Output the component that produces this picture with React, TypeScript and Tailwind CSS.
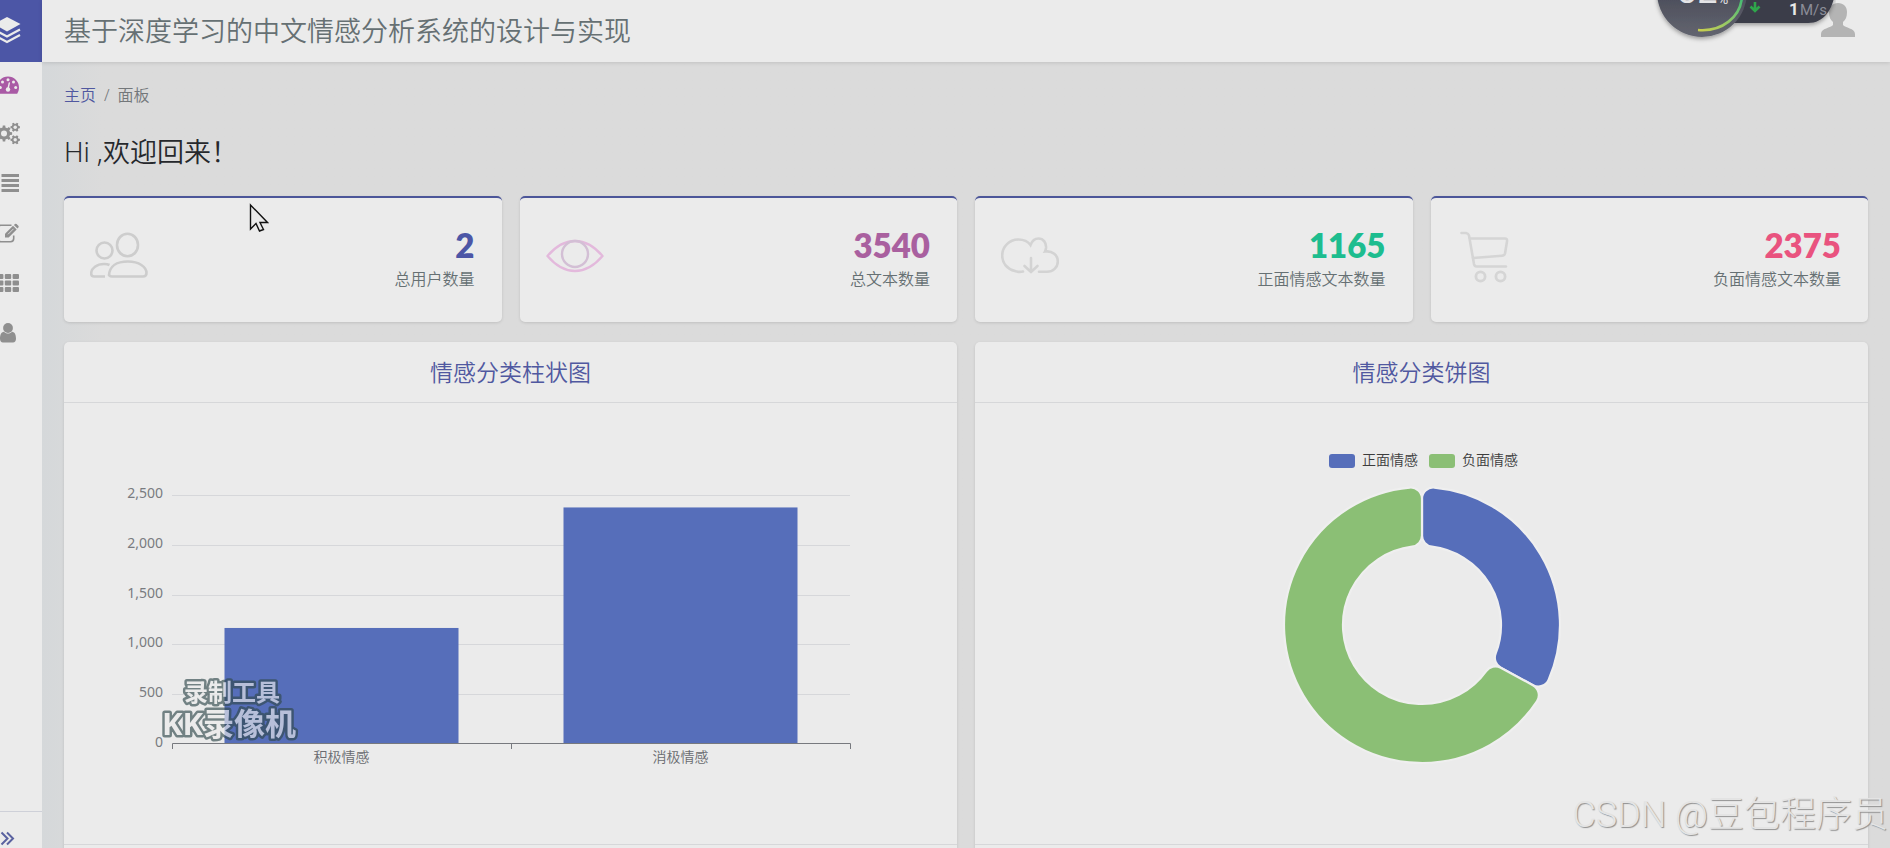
import React from "react";

const font = "font-['Noto_Sans','Noto_Sans_CJK_SC',sans-serif]";

/* ---------- sidebar icons ---------- */

function LayersLogo() {
  return (
    <svg viewBox="0 0 28 28" className="h-7 w-7" aria-hidden="true">
      <path d="M14 0 L27.500 7 L14 14.500 L0.500 7 Z" fill="#ebebeb" />
      <path d="M1 12.500 L14 19.500 L27 12.500" fill="none" stroke="#ebebeb" strokeWidth="2.200" />
      <path d="M1 18 L14 25 L27 18" fill="none" stroke="#ebebeb" strokeWidth="2.200" />
    </svg>
  );
}

function DashboardIcon() {
  return (
    <svg viewBox="0 0 22 22" className="h-[22px] w-[22px]" aria-hidden="true">
      <path
        d="M11 4.500 A11 11 0 0 1 22 15.500 C22 18 21.300 20 20.200 21.700 H1.800 C0.700 20 0 18 0 15.500 A11 11 0 0 1 11 4.500 Z"
        fill="#a95aa5"
      />
      <g fill="#ebebeb">
        <circle cx="3.300" cy="15.500" r="1.500" />
        <circle cx="5.500" cy="10" r="1.500" />
        <circle cx="11" cy="7.700" r="1.500" />
        <circle cx="16.500" cy="10" r="1.500" />
        <circle cx="18.700" cy="15.500" r="1.500" />
        <circle cx="11" cy="17.500" r="2.200" />
      </g>
      <path d="M11 17 L12.300 11" stroke="#ebebeb" strokeWidth="1.400" strokeLinecap="round" />
    </svg>
  );
}

function gearPath(cx: number, cy: number, outer: number, root: number, teeth: number) {
  const pts: string[] = [];
  const step = (Math.PI * 2) / teeth;
  for (let i = 0; i < teeth; i++) {
    const a = i * step;
    const marks: [number, number][] = [
      [root, a - step * 0.3],
      [outer, a - step * 0.19],
      [outer, a + step * 0.19],
      [root, a + step * 0.3],
    ];
    marks.forEach(([r, t]) =>
      pts.push(`${(cx + r * Math.cos(t)).toFixed(2)} ${(cy + r * Math.sin(t)).toFixed(2)}`)
    );
  }
  return `M${pts.join("L")}Z`;
}

function CogsIcon() {
  return (
    <svg viewBox="0 0 24 24" className="h-6 w-6" aria-hidden="true">
      <g fill="#8f8f8f">
        <path d={gearPath(8, 12.5, 8.2, 6.2, 8)} />
        <path d={gearPath(19.2, 6.2, 4.8, 3.6, 6)} />
        <path d={gearPath(19.2, 18.8, 4.8, 3.6, 6)} />
      </g>
      <g fill="#ebebeb">
        <circle cx="8" cy="12.500" r="3" />
        <circle cx="19.200" cy="6.200" r="1.700" />
        <circle cx="19.200" cy="18.800" r="1.700" />
      </g>
    </svg>
  );
}

function ListIcon() {
  return (
    <svg viewBox="0 0 22 18" className="h-[18px] w-[22px]" fill="#8f8f8f" aria-hidden="true">
      {[0, 5, 10, 15].map((y) => (
        <g key={y}>
          <rect x="0" y={y} width="3" height="3" />
          <rect x="4.500" y={y} width="17.500" height="3" />
        </g>
      ))}
    </svg>
  );
}

function EditIcon() {
  return (
    <svg viewBox="0 0 22 20" className="h-5 w-[22px]" fill="none" stroke="#8f8f8f" strokeWidth="1.600" aria-hidden="true">
      <path d="M14.500 2.300 H4 Q0.800 2.300 0.800 5.500 V15.500 Q0.800 18.700 4 18.700 H13.500 Q16.700 18.700 16.700 15.500 V12.500" />
      <path d="M8 14.500 V10.800 L16 2.800 L19.700 6.500 L11.700 14.500 Z" fill="#8f8f8f" stroke="none" />
      <path d="M16.900 1.900 L18 0.900 Q18.800 0.300 19.600 1.100 L21.300 2.800 Q22.100 3.600 21.400 4.400 L20.500 5.500 Z" fill="#8f8f8f" stroke="none" />
      <path d="M11 11.300 L16.500 5.800" stroke="#ebebeb" strokeWidth="0.800" />
    </svg>
  );
}

function GridIcon() {
  return (
    <svg viewBox="0 0 22 18" className="h-[18px] w-[22px]" fill="#8f8f8f" aria-hidden="true">
      {[0, 6.5, 13].map((y) =>
        [0, 7.8, 15.6].map((x) => (
          <rect key={`${x}-${y}`} x={x} y={y} width="6.400" height="5" rx="1" />
        ))
      )}
    </svg>
  );
}

function UserIcon() {
  return (
    <svg viewBox="0 0 16 20" className="h-5 w-4" fill="#8f8f8f" aria-hidden="true">
      <circle cx="8" cy="5" r="4.900" />
      <path d="M4 8.700 C5 9.900 6.500 10.500 8 10.500 C9.500 10.500 11 9.900 12 8.700 C15 8.900 16 12 16 15.800 C16 18 14.800 19.500 13 19.500 H3 C1.200 19.500 0 18 0 15.800 C0 12 1 8.900 4 8.700 Z" />
    </svg>
  );
}

const navItems = [
  { label: "面板", icon: <DashboardIcon /> },
  { label: "设置", icon: <CogsIcon /> },
  { label: "列表", icon: <ListIcon /> },
  { label: "编辑", icon: <EditIcon /> },
  { label: "表格", icon: <GridIcon /> },
  { label: "用户", icon: <UserIcon /> },
];

function Sidebar() {
  return (
    <aside className="flex w-[42px] shrink-0 flex-col overflow-hidden bg-[#ebebeb]">
      <a
        href="#home"
        aria-label="首页"
        className="-ml-[28px] flex h-[62px] w-[70px] shrink-0 items-center justify-center bg-[#4c56a6]"
      >
        <LayersLogo />
      </a>
      <nav className="-ml-[26px] flex w-[68px] flex-1 flex-col gap-[10px] pt-px">
        {navItems.map((item) => (
          <a
            key={item.label}
            href="#nav"
            aria-label={item.label}
            className="flex h-10 items-center justify-center"
          >
            {item.icon}
          </a>
        ))}
      </nav>
      <button
        type="button"
        aria-label="展开"
        className="flex h-[37px] shrink-0 items-center border-t border-[#ced0d8] pt-[18px]"
      >
        <svg viewBox="0 0 16 18" className="h-[18px] w-4" fill="none" stroke="#5a62a0" strokeWidth="2" aria-hidden="true">
          <path d="M1.500 2.500 L7.500 8.500 L1.500 14.500 M7 2.500 L13 8.500 L7 14.500" />
        </svg>
      </button>
    </aside>
  );
}

/* ---------- header ---------- */

function SpeedWidget() {
  return (
    <svg
      viewBox="0 0 190 46"
      className="absolute top-0 right-[54px] h-[46px] w-[190px]"
      role="img"
      aria-label="82% 1M/s"
    >
      <defs>
        <linearGradient id="arc" x1="1" y1="0" x2="0" y2="1">
          <stop offset="0" stopColor="#3dbb74" />
          <stop offset="0.500" stopColor="#8fc76a" />
          <stop offset="1" stopColor="#c9cf4e" />
        </linearGradient>
        <linearGradient id="disc" x1="0" y1="0" x2="0" y2="1">
          <stop offset="0.500" stopColor="#4a4c59" />
          <stop offset="1" stopColor="#636570" />
        </linearGradient>
        <filter id="soft" x="-20%" y="-20%" width="140%" height="150%">
          <feDropShadow dx="0" dy="2" stdDeviation="2" floodColor="#000" floodOpacity="0.350" />
        </filter>
      </defs>
      <g filter="url(#soft)">
        <path d="M50 -20 H190 C190 4 181 23 162 23 H50 Z" fill="#3b3c49" />
        <circle cx="56" cy="-8" r="45" fill="url(#disc)" />
      </g>
      <path d="M52 30 C76 32 95 17 96 -4" fill="none" stroke="url(#arc)" strokeWidth="2.600" />
      <text x="31" y="3" fontSize="36" fill="#e4e4e6" fontFamily="Roboto, sans-serif">82</text>
      <text x="72" y="4" fontSize="14" fill="#e4e4e6" fontFamily="Roboto, sans-serif">%</text>
      <path d="M109 2 V11 M104.500 6.500 L109 11 L113.500 6.500" fill="none" stroke="#2fa64b" strokeWidth="2.600" />
      <text x="143" y="15" fontSize="17" fontWeight="700" fill="#e8e8e8" fontFamily="Roboto, sans-serif">1</text>
      <text x="154" y="15" fontSize="15" fill="#8c8d98" fontFamily="Roboto, sans-serif">M/s</text>
    </svg>
  );
}

function Header() {
  return (
    <header className="relative z-10 flex h-[62px] shrink-0 items-center justify-between bg-[#ebebeb] pr-[35px] pl-[22px] shadow-[0_1px_4px_rgba(0,0,0,0.12)]">
      <h1 className="text-[27px] leading-[60px] font-[350] whitespace-nowrap text-[#667073]">
        基于深度学习的中文情感分析系统的设计与实现
      </h1>
      <button type="button" aria-label="用户头像" className="flex h-[62px] items-start pt-[3px]">
        <svg viewBox="0 0 34 34" className="h-[34px] w-[34px]" fill="#b4b4b4" aria-hidden="true">
          <path d="M17 0 C22.500 0 26 3.500 26 9 C26 14 24.500 17 22 19 V22 C24 25 34 25 34 31 V34 H0 V31 C0 25 10 25 12 22 V19 C9.500 17 8 14 8 9 C8 3.500 11.500 0 17 0 Z" />
        </svg>
      </button>
      <SpeedWidget />
    </header>
  );
}

/* ---------- stat cards ---------- */

function UsersIcon() {
  return (
    <svg viewBox="0 0 58 58" className="h-[58px] w-[58px]" fill="none" stroke="#cdcdcd" strokeWidth="2.600" aria-hidden="true">
      <ellipse cx="37.500" cy="19" rx="10.500" ry="11.300" />
      <circle cx="14.500" cy="24.500" r="8" />
      <path d="M19 50 C19 40 27 35.500 38 35.500 C49 35.500 56.500 41 56.500 47 C56.500 49.500 55.500 50.500 53 50.500 H22 C20 50.500 19 49.500 19 48" />
      <path d="M15 50.500 H4 C2 50.500 1.200 49.500 1.200 47.500 C1.200 42 7 38 14 38 C16 38 18 38.300 19.500 39" />
    </svg>
  );
}

function EyeIcon() {
  return (
    <svg viewBox="0 0 58 58" className="h-[58px] w-[58px]" fill="none" strokeWidth="2.400" strokeLinejoin="round" aria-hidden="true">
      <path d="M1.500 30 C10 20 18 15 29 15 C40 15 48 20 56.500 30 C48 40 40 45 29 45 C18 45 10 40 1.500 30 Z" stroke="#e3b9dc" />
      <circle cx="29" cy="28" r="13" stroke="#d3bfd5" />
    </svg>
  );
}

function CloudIcon() {
  return (
    <svg viewBox="0 0 58 58" className="h-[58px] w-[58px]" fill="none" stroke="#d3d3d3" strokeWidth="2.600" strokeLinecap="round" aria-hidden="true">
      <path d="M22 45.500 C20 46 17 46 14 45 C6 43 1.200 37 1.200 29.500 C1.200 20.500 8.500 13.500 17.500 13.500 C23 13.500 27 15.500 29.500 19 C31 15 34 12.500 37.500 12.500 C42.500 12.500 45.500 17 45 22 C44.800 23.500 44.500 24.500 44 25.500 C51.500 24.500 56.800 29 56.800 35.500 C56.800 41.500 52 45.800 46 45.800 H38" />
      <path d="M30 32 V46 M23.500 40 L30 46 L36.500 40" />
    </svg>
  );
}

function CartIcon() {
  return (
    <svg viewBox="0 0 58 58" className="h-[58px] w-[58px]" fill="none" stroke="#d5d5d5" strokeWidth="2.600" strokeLinecap="round" strokeLinejoin="round" aria-hidden="true">
      <path d="M4.500 7 H9 Q11.500 7.500 12 9.500 L17 38 Q17.500 40.500 19.500 40.500 H49" />
      <path d="M13 12.500 H48 Q50.500 12.500 50 15.500 L48 27.500 Q47.500 29.500 45 29.700 L16 32" />
      <circle cx="23.500" cy="50.500" r="4.600" strokeWidth="2.800" />
      <circle cx="43.500" cy="50.500" r="4.600" strokeWidth="2.800" />
    </svg>
  );
}

const stats = [
  { value: "2", label: "总用户数量", color: "text-[#4c56a6]", icon: <UsersIcon /> },
  { value: "3540", label: "总文本数量", color: "text-[#a9609f]", icon: <EyeIcon /> },
  { value: "1165", label: "正面情感文本数量", color: "text-[#1dbd8f]", icon: <CloudIcon /> },
  { value: "2375", label: "负面情感文本数量", color: "text-[#e9537f]", icon: <CartIcon /> },
];

function StatCard({ value, label, color, icon }: (typeof stats)[number]) {
  return (
    <article className="flex h-[126px] items-start justify-between rounded-[5px] border-t-2 border-[#4c5699] bg-[#ebebeb] pt-[28px] pr-[27px] pl-[26px] shadow-[0_1px_3px_rgba(0,0,0,0.12)]">
      {icon}
      <div className="text-right">
        <p className={`font-[Lato] text-[33px] leading-[38px] font-extrabold ${color}`}>{value}</p>
        <p className="text-base leading-[30px] font-[350] text-[#667073]">{label}</p>
      </div>
    </article>
  );
}

/* ---------- charts ---------- */

function ChartCard({ title, children }: { title: string; children: React.ReactNode }) {
  return (
    <section className="rounded-[5px] bg-[#ebebeb] shadow-[0_1px_3px_rgba(0,0,0,0.12)]">
      <h3 className="border-b border-[#d6d7d9] text-center text-[23px] leading-[60px] font-[350] text-[#5058a0]">
        {title}
      </h3>
      <div className="h-[441px]">{children}</div>
      <footer className="h-12 border-t border-[#d6d7d9]" />
    </section>
  );
}

const bars = [
  { name: "积极情感", value: 1165, center: 277.5 },
  { name: "消极情感", value: 2375, center: 616.5 },
];

function BarChart() {
  const base = 341;
  const scale = 249 / 2500;
  return (
    <svg viewBox="0 0 893 441" className="h-full w-full" fontSize="14" role="img" aria-label="情感分类柱状图">
      {[0, 500, 1000, 1500, 2000, 2500].map((v) => {
        const y = Math.round(base - v * scale);
        return (
          <g key={v}>
            {v > 0 && <path d={`M108 ${y + 0.5} H786`} stroke="#d6d7da" />}
            <text x="99" y={y + 3} textAnchor="end" fill="#797b80">
              {v.toLocaleString("en-US")}
            </text>
          </g>
        );
      })}
      {bars.map((b) => (
        <g key={b.name}>
          <rect x={b.center - 117} y={base - b.value * scale} width="234" height={b.value * scale} fill="#566eba" />
          <text x={b.center} y="359" textAnchor="middle" fontWeight="350" fill="#696b70">
            {b.name}
          </text>
        </g>
      ))}
      <path d="M108.500 346 V340.500 H786.500 V346 M447.500 340.500 V346" fill="none" stroke="#77797e" />
      <g
        fill="#ebebeb"
        stroke="#31494c"
        strokeWidth="5"
        strokeLinejoin="round"
        paintOrder="stroke"
        fontWeight="700"
        textAnchor="middle"
        opacity="0.650"
      >
        <text x="168" y="298" fontSize="24">录制工具</text>
        <text x="165" y="332" fontSize="31">KK录像机</text>
      </g>
    </svg>
  );
}

function ringSlice(cx: number, cy: number, R: number, r: number, c: number, from: number, to: number) {
  const at = (rad: number, a: number) =>
    `${(cx + rad * Math.sin(a)).toFixed(2)} ${(cy - rad * Math.cos(a)).toFixed(2)}`;
  const ao = Math.asin(c / (R - c));
  const ai = Math.asin(c / (r + c));
  const lo = Math.sqrt((R - c) ** 2 - c * c);
  const li = Math.sqrt((r + c) ** 2 - c * c);
  const large = to - from > Math.PI ? 1 : 0;
  return [
    `M${at(li, from)}`,
    `L${at(lo, from)}`,
    `A${c} ${c} 0 0 1 ${at(R, from + ao)}`,
    `A${R} ${R} 0 ${large} 1 ${at(R, to - ao)}`,
    `A${c} ${c} 0 0 1 ${at(lo, to)}`,
    `L${at(li, to)}`,
    `A${c} ${c} 0 0 1 ${at(r, to - ai)}`,
    `A${r} ${r} 0 ${large} 0 ${at(r, from + ai)}`,
    `A${c} ${c} 0 0 1 ${at(li, from)}Z`,
  ].join(" ");
}

function PieChart() {
  const split = (1165 / 3540) * Math.PI * 2;
  const cx = 447;
  const cy = 222;
  return (
    <svg viewBox="0 0 893 441" className="h-full w-full" fontSize="14" role="img" aria-label="情感分类饼图">
      <rect x="354" y="51" width="26" height="14" rx="3" fill="#566eba" />
      <text x="387" y="62" fontWeight="350" fill="#3c3c3c">正面情感</text>
      <rect x="454" y="51" width="26" height="14" rx="3" fill="#8bbf75" />
      <text x="487" y="62" fontWeight="350" fill="#3c3c3c">负面情感</text>
      <g stroke="#efefef" strokeWidth="2.200">
        <path d={ringSlice(cx, cy, 138, 79, 11.3, 0, split)} fill="#566eba" />
        <path d={ringSlice(cx, cy, 138, 79, 11.3, split, Math.PI * 2)} fill="#8bbf75" />
      </g>
    </svg>
  );
}

/* ---------- page ---------- */

export default function App() {
  return (
    <div className={`relative flex h-screen overflow-hidden bg-[#dbdbdb] ${font}`}>
      <Sidebar />
      <div className="flex min-w-0 flex-1 flex-col">
        <Header />
        <main className="min-h-0 flex-1 overflow-hidden bg-linear-to-r from-[#d5d8da] to-[#dbdbdb] to-[60px] px-[22px]">
          <nav aria-label="breadcrumb" className="pt-[21px] text-base leading-6 font-[350]">
            <ol className="flex gap-2 text-[#73777a]">
              <li>
                <a href="#home" className="text-[#5058a0]">主页</a>
              </li>
              <li aria-hidden="true">/</li>
              <li>面板</li>
            </ol>
          </nav>
          <h2 className="mt-[25px] mb-[24px] text-[27px] leading-10 font-[350] text-[#26282c]">
            Hi ,欢迎回来！
          </h2>
          <div className="grid grid-cols-4 gap-[18px]">
            {stats.map((s) => (
              <StatCard key={s.label} {...s} />
            ))}
          </div>
          <div className="mt-5 grid grid-cols-2 gap-[18px]">
            <ChartCard title="情感分类柱状图">
              <BarChart />
            </ChartCard>
            <ChartCard title="情感分类饼图">
              <PieChart />
            </ChartCard>
          </div>
        </main>
      </div>

      <svg viewBox="0 0 20 30" className="absolute top-[203px] left-[249px] h-[30px] w-5" aria-hidden="true">
        <path
          d="M1.500 2 V26 L7 20.500 L10.500 28 L14.500 26.500 L11 19.500 H18.500 Z"
          fill="#ebebeb"
          stroke="#111"
          strokeWidth="1.400"
        />
      </svg>
      <p className="absolute right-[2px] bottom-[6px] font-[Roboto,'Noto_Sans_CJK_SC',sans-serif] text-[36px] leading-[54px] font-light whitespace-nowrap text-[#e4e4e4] [text-shadow:1px_1px_1px_#909090]">
        CSDN @豆包程序员
      </p>
    </div>
  );
}
